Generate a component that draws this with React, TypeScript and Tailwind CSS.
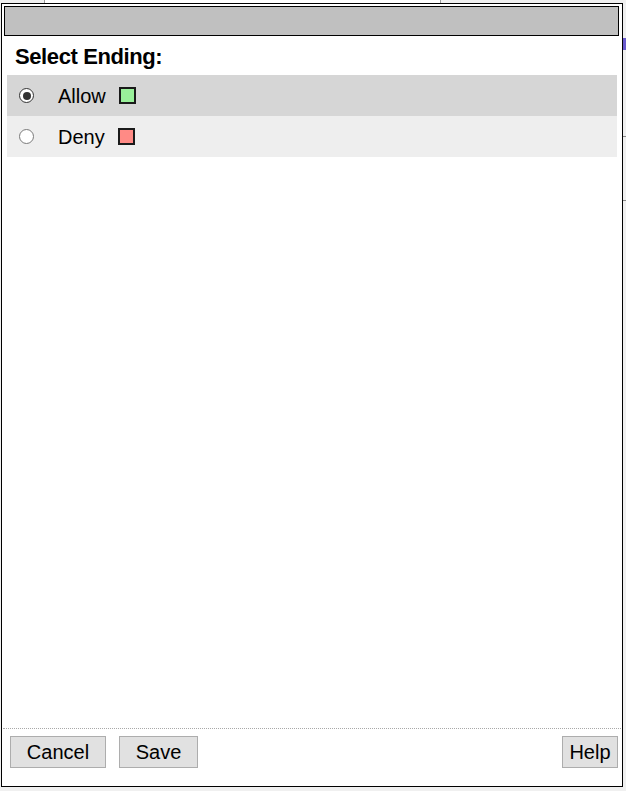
import React from "react";

function Radio({ checked }: { checked: boolean }) {
  return (
    <span
      className={
        "flex h-[15px] w-[15px] items-center justify-center rounded-full border bg-white " +
        (checked ? "border-[#333333]" : "border-[#7a7a7a]")
      }
    >
      {checked && <span className="h-[8px] w-[8px] rounded-full bg-[#333333]" />}
    </span>
  );
}

function Row({
  label,
  color,
  checked,
  bg,
}: {
  label: string;
  color: string;
  checked: boolean;
  bg: string;
}) {
  return (
    <div className={"flex h-[41px] items-center " + bg}>
      <div className="ml-[12px] w-[39px]">
        <Radio checked={checked} />
      </div>
      <span className="text-[20px] leading-none text-black">{label}</span>
      <span
        className="ml-[13px] h-[17px] w-[17px] border-2 border-[#1a1a1a]"
        style={{ backgroundColor: color }}
      />
    </div>
  );
}

export default function App() {
  return (
    <div
      className="relative h-[791px] w-[626px] overflow-hidden bg-[#f0f0f0]"
      style={{ fontFamily: '"Liberation Sans", Arial, sans-serif' }}
    >
      {/* background page peeking out */}
      <div className="absolute left-[44px] top-[-10px] h-[14px] w-[397px] border border-[#9a9a9a] bg-white" />
      <div className="absolute left-[623px] top-[38px] h-[12px] w-[3px] bg-[#6a5acd]" />
      <div className="absolute left-[623px] top-[136px] h-[1px] w-[3px] bg-[#888888]" />
      <div className="absolute left-[623px] top-[200px] h-[1px] w-[3px] bg-[#888888]" />

      {/* dialog */}
      <div className="absolute left-[1px] top-[3px] flex h-[784px] w-[622px] flex-col border border-black bg-white">
        <div className="mx-[2px] mt-[2px] h-[30px] w-[615px] border border-black bg-[#c0c0c0]" />
        <div className="ml-[13px] mt-[8px] h-[26px] text-[22px] font-bold leading-[26px] tracking-[-0.4px] text-black">
          Select Ending:
        </div>
        <div className="ml-[5px] mt-[5px] w-[610px]">
          <Row label="Allow" color="#99f09a" checked bg="bg-[#d6d6d6]" />
          <Row label="Deny" color="#ff8a85" checked={false} bg="bg-[#eeeeee]" />
        </div>
        <div className="flex-1" />
        <div className="mx-[1px] border-t border-dotted border-[#a8a8a8]" />
        <div className="flex h-[57px] items-start px-[8px] pt-[7px]">
          <button className="h-[32px] w-[96px] border border-[#adadad] bg-[#e1e1e1] text-[20px] leading-none text-black">
            Cancel
          </button>
          <button className="ml-[13px] h-[32px] w-[79px] border border-[#adadad] bg-[#e1e1e1] text-[20px] leading-none text-black">
            Save
          </button>
          <div className="flex-1" />
          <button className="mr-[-4px] h-[32px] w-[56px] border border-[#adadad] bg-[#e1e1e1] text-[20px] leading-none text-black">
            Help
          </button>
        </div>
      </div>
    </div>
  );
}
